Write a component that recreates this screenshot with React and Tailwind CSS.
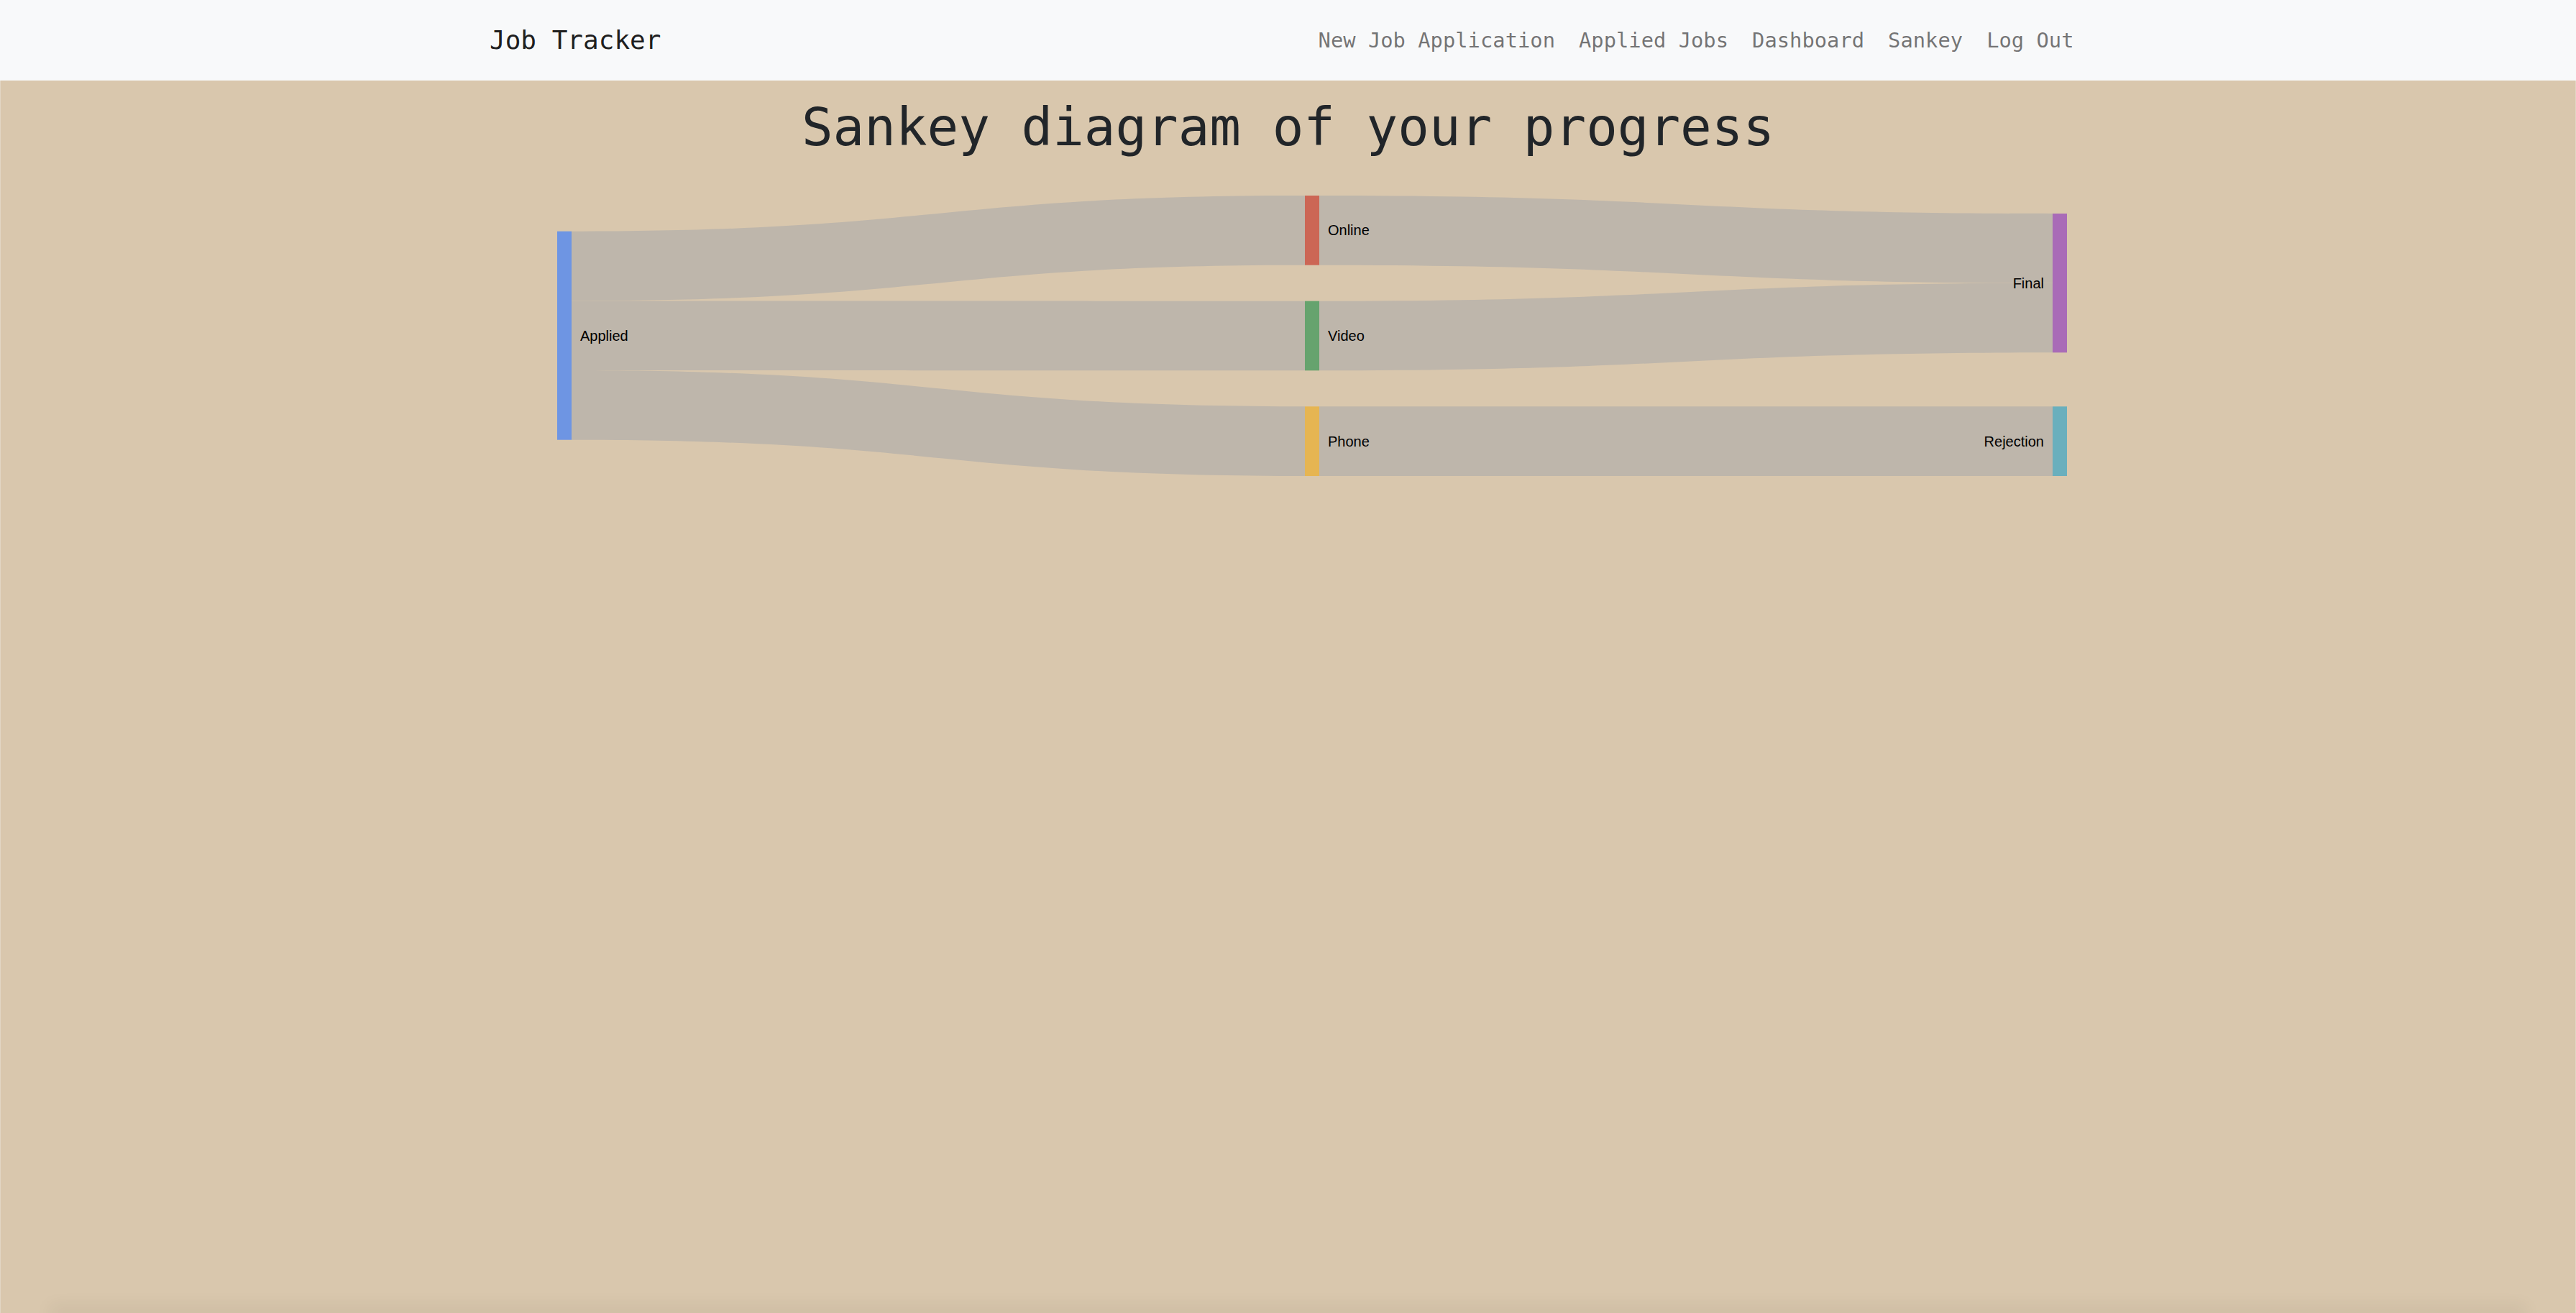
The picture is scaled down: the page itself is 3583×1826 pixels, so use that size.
import React from "react";

const OY = 240;

const nodes = [
  { x: 774, y0: 321.7, y1: 611.7, c: "#6e95e3", label: "Applied", side: "r" },
  { x: 1814, y0: 272, y1: 368.7, c: "#cc6655", label: "Online", side: "r" },
  { x: 1814, y0: 418.7, y1: 515.3, c: "#66a36e", label: "Video", side: "r" },
  { x: 1814, y0: 565.3, y1: 662, c: "#e6b552", label: "Phone", side: "r" },
  { x: 2854, y0: 297, y1: 490.3, c: "#a96bb7", label: "Final", side: "l" },
  { x: 2854, y0: 565.3, y1: 662, c: "#6aafbd", label: "Rejection", side: "l" },
];

const links = [
  [794, 1814, 321.7, 418.4, 272, 368.7],
  [794, 1814, 418.4, 515.0, 418.7, 515.3],
  [794, 1814, 515.0, 611.7, 565.3, 662],
  [1834, 2854, 272, 368.7, 297, 393.7],
  [1834, 2854, 418.7, 515.3, 393.7, 490.3],
  [1834, 2854, 565.3, 662, 565.3, 662],
];

function linkPath([x0, x1, s0, s1, t0, t1]) {
  const m = (x0 + x1) / 2;
  const a = s0 - OY, b = s1 - OY, c = t0 - OY, d = t1 - OY;
  return `M${x0},${a} C${m},${a} ${m},${c} ${x1},${c} L${x1},${d} C${m},${d} ${m},${b} ${x0},${b} Z`;
}

function Sankey() {
  return (
    <svg width="3583" height="460" viewBox="0 0 3583 460" className="block shrink-0">
      {links.map((l, i) => (
        <path key={i} d={linkPath(l)} fill="#beb6ab" />
      ))}
      {nodes.map((n, i) => (
        <g key={i}>
          <rect x={n.x} y={n.y0 - OY} width="20" height={n.y1 - n.y0} fill={n.c} />
          <text
            x={n.side === "r" ? n.x + 32 : n.x - 12}
            y={(n.y0 + n.y1) / 2 - OY}
            dy="0.35em"
            textAnchor={n.side === "r" ? "start" : "end"}
            fontFamily="'Liberation Sans', Arial, sans-serif"
            fontSize="20"
            fill="#000000"
          >
            {n.label}
          </text>
        </g>
      ))}
    </svg>
  );
}

export default function App() {
  const mono = { fontFamily: "'DejaVu Sans Mono', 'Liberation Mono', monospace" };
  return (
    <div className="min-h-screen flex flex-col bg-[#d9c7ad]">
      <nav className="h-[112px] shrink-0 bg-[#f8f9fa]" style={mono}>
        <div className="ml-[681px] w-[2220px] h-full flex items-center justify-between">
          <span className="text-[36px] leading-none text-[rgba(0,0,0,0.9)]">Job Tracker</span>
          <div className="flex items-center text-[28.8px] leading-none text-[rgba(0,0,0,0.55)]">
            <span className="px-[16.5px] whitespace-pre">New Job Application</span>
            <span className="px-[16.5px] whitespace-pre">Applied Jobs</span>
            <span className="px-[16.5px]">Dashboard</span>
            <span className="px-[16.5px]">Sankey</span>
            <span className="px-[16.5px] whitespace-pre">Log Out</span>
          </div>
        </div>
      </nav>
      <main className="flex-1 flex flex-col border-x border-[#e2d6c4]">
        <h1
          className="mt-[22px] mb-[20px] text-center text-[72.5px] leading-[86px] font-normal text-[#212529]"
          style={mono}
        >
          Sankey diagram of your progress
        </h1>
        <Sankey />
      </main>
      <div className="h-0 shrink-0 mx-[78px] shadow-[0_0_24px_8px_rgba(0,0,0,0.08)]" />
    </div>
  );
}
